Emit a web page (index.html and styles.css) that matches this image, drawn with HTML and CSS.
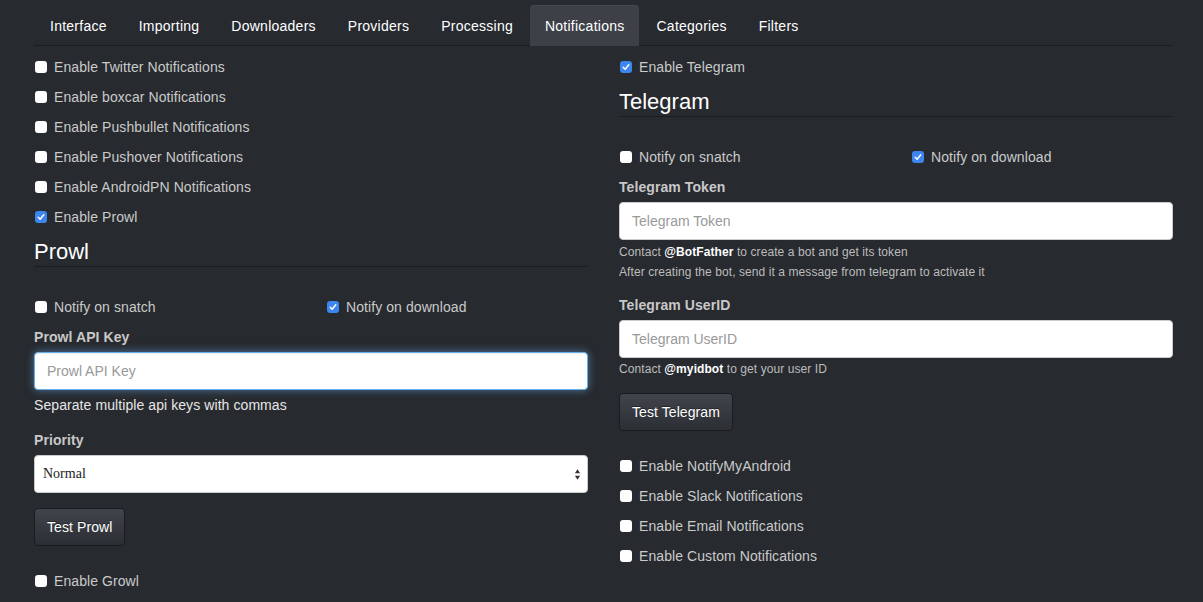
FILE: index.html
```html
<!DOCTYPE html>
<html>
<head>
<meta charset="utf-8">
<link rel="stylesheet" href="styles.css">
</head>
<body>
<div class="page">
  <ul class="tabs">
    <li class="tab">Interface</li>
    <li class="tab">Importing</li>
    <li class="tab">Downloaders</li>
    <li class="tab">Providers</li>
    <li class="tab">Processing</li>
    <li class="tab active">Notifications</li>
    <li class="tab">Categories</li>
    <li class="tab">Filters</li>
  </ul>
  <div class="columns">
    <div class="col">
      <div class="checks">
        <label class="check"><span class="box"></span>Enable Twitter Notifications</label>
        <label class="check"><span class="box"></span>Enable boxcar Notifications</label>
        <label class="check"><span class="box"></span>Enable Pushbullet Notifications</label>
        <label class="check"><span class="box"></span>Enable Pushover Notifications</label>
        <label class="check"><span class="box"></span>Enable AndroidPN Notifications</label>
        <label class="check"><span class="box on"><svg viewBox="0 0 12 12"><path d="M3.2 6.3 L5.1 8.2 L8.8 3.8" /></svg></span>Enable Prowl</label>
      </div>
      <h3 class="section">Prowl</h3>
      <div class="halves">
        <label class="check"><span class="box"></span>Notify on snatch</label>
        <label class="check"><span class="box on"><svg viewBox="0 0 12 12"><path d="M3.2 6.3 L5.1 8.2 L8.8 3.8" /></svg></span>Notify on download</label>
      </div>
      <div class="field">
        <div class="label">Prowl API Key</div>
        <input class="input focus" type="text" placeholder="Prowl API Key">
        <div class="help-lg">Separate multiple api keys with commas</div>
      </div>
      <div class="field field-gap">
        <div class="label">Priority</div>
        <div class="select">
          <span class="select-val">Normal</span>
          <svg class="arrows" viewBox="0 0 8 14"><path d="M4 1 L7 5.5 L1 5.5 Z M4 13 L7 8.5 L1 8.5 Z" /></svg>
        </div>
      </div>
      <button class="btn">Test Prowl</button>
      <div class="checks after-btn">
        <label class="check"><span class="box"></span>Enable Growl</label>
      </div>
    </div>
    <div class="col">
      <div class="checks">
        <label class="check"><span class="box on"><svg viewBox="0 0 12 12"><path d="M3.2 6.3 L5.1 8.2 L8.8 3.8" /></svg></span>Enable Telegram</label>
      </div>
      <h3 class="section">Telegram</h3>
      <div class="halves">
        <label class="check"><span class="box"></span>Notify on snatch</label>
        <label class="check"><span class="box on"><svg viewBox="0 0 12 12"><path d="M3.2 6.3 L5.1 8.2 L8.8 3.8" /></svg></span>Notify on download</label>
      </div>
      <div class="field">
        <div class="label">Telegram Token</div>
        <input class="input" type="text" placeholder="Telegram Token">
        <div class="help help-first">Contact <b>@BotFather</b> to create a bot and get its token</div>
        <div class="help">After creating the bot, send it a message from telegram to activate it</div>
      </div>
      <div class="field field-gap2">
        <div class="label">Telegram UserID</div>
        <input class="input" type="text" placeholder="Telegram UserID">
        <div class="help help-first1">Contact <b>@myidbot</b> to get your user ID</div>
      </div>
      <button class="btn btn-tg">Test Telegram</button>
      <div class="checks after-btn">
        <label class="check"><span class="box"></span>Enable NotifyMyAndroid</label>
        <label class="check"><span class="box"></span>Enable Slack Notifications</label>
        <label class="check"><span class="box"></span>Enable Email Notifications</label>
        <label class="check"><span class="box"></span>Enable Custom Notifications</label>
      </div>
    </div>
  </div>
</div>
</body>
</html>
```

FILE: styles.css
```css
html, body {
  margin: 0;
  padding: 0;
  background: #272a2f;
  height: 100%;
  overflow: hidden;
}
body {
  font-family: "Liberation Sans", Arial, Helvetica, sans-serif;
  font-size: 14px;
  line-height: 20px;
  color: #cfcfcf;
  letter-spacing: 0.08px;
}
.page {
  margin-left: 34px;
  width: 1139px;
  padding-top: 5px;
}
.tabs {
  list-style: none;
  margin: 0;
  padding: 0 0 0 1px;
  display: flex;
  border-bottom: 1px solid #1b1d21;
}
.tab {
  padding: 10px 15px;
  margin-right: 2px;
  color: #ffffff;
  line-height: 20px;
  letter-spacing: 0.25px;
  border-radius: 4px 4px 0 0;
  margin-bottom: -1px;
  border-top: 1px solid transparent;
}
.tab.active {
  background: #3d4047;
  border-top-color: #45484f;
}
.columns {
  display: grid;
  grid-template-columns: 554px 554px;
  column-gap: 31px;
  padding-top: 11px;
}
.col {
  display: flex;
  flex-direction: column;
  align-items: flex-start;
}
.checks {
  display: flex;
  flex-direction: column;
  gap: 10px;
}
.check {
  display: flex;
  align-items: center;
  height: 20px;
  gap: 7px;
  color: #cacaca;
  white-space: nowrap;
}
.box {
  width: 12px;
  height: 12px;
  margin-left: 1px;
  border-radius: 3px;
  background: #ffffff;
  display: inline-flex;
  align-items: center;
  justify-content: center;
  flex: none;
}
.box.on {
  background: #3d86f0;
}
.box svg {
  width: 12px;
  height: 12px;
}
.box svg path {
  fill: none;
  stroke: #ffffff;
  stroke-width: 1.5;
  stroke-linecap: round;
  stroke-linejoin: round;
}
.section {
  align-self: stretch;
  margin: 13px 0 0 0;
  font-size: 22px;
  font-weight: normal;
  line-height: 24px;
  color: #ffffff;
  padding-bottom: 2px;
  border-bottom: 1px solid #1a1c20;
  letter-spacing: 0;
}
.halves {
  align-self: stretch;
  display: grid;
  grid-template-columns: 1fr 1fr;
  column-gap: 30px;
  margin-top: 30px;
}
.field {
  align-self: stretch;
  display: flex;
  flex-direction: column;
  margin-top: 10px;
}
.field-gap {
  margin-top: 15px;
}
.field-gap2 {
  margin-top: 13px;
}
.label {
  font-weight: bold;
  color: #c8c8c8;
  line-height: 20px;
  margin-bottom: 5px;
}
.input {
  box-sizing: border-box;
  height: 38px;
  width: 100%;
  margin: 0;
  padding: 8px 12px;
  border: 1px solid #cccccc;
  border-radius: 4px;
  background: #ffffff;
  font-family: "Liberation Sans", Arial, sans-serif;
  font-size: 14px;
  color: #555;
  outline: none;
}
.input::placeholder {
  color: #999999;
}
.input.focus {
  border-color: #66afe9;
  box-shadow: inset 0 1px 1px rgba(0,0,0,.075), 0 0 8px rgba(102,175,233,.6);
}
.help-lg {
  margin-top: 5px;
  color: #e6e6e6;
  line-height: 20px;
}
.help {
  font-size: 12px;
  line-height: 20px;
  color: #bcbcbc;
}
.help-first {
  margin-top: 2px;
}
.help-first1 {
  margin-top: 1px;
}
.help b {
  color: #ffffff;
}
.select {
  box-sizing: border-box;
  height: 38px;
  width: 100%;
  background: #ffffff;
  border: 1px solid #cccccc;
  border-radius: 4px;
  display: flex;
  align-items: center;
  justify-content: space-between;
  padding: 0 6px 0 8px;
}
.select-val {
  font-family: "Liberation Serif", "Times New Roman", serif;
  font-size: 14px;
  color: #222;
  letter-spacing: 0;
}
.arrows {
  width: 7px;
  height: 13px;
}
.arrows path {
  fill: #333333;
}
.btn {
  margin-top: 15px;
  box-sizing: border-box;
  height: 38px;
  padding: 8px 12px;
  border: 1px solid #1a1c20;
  border-radius: 4px;
  background: linear-gradient(#41444b, #2b2e33);
  color: #ffffff;
  font-family: "Liberation Sans", Arial, sans-serif;
  font-size: 14px;
  line-height: 20px;
  letter-spacing: 0.08px;
  text-shadow: 0 -1px 0 rgba(0,0,0,.4);
  cursor: pointer;
}
.btn-tg {
  margin-top: 14px;
}
.after-btn {
  margin-top: 25px;
}
```
